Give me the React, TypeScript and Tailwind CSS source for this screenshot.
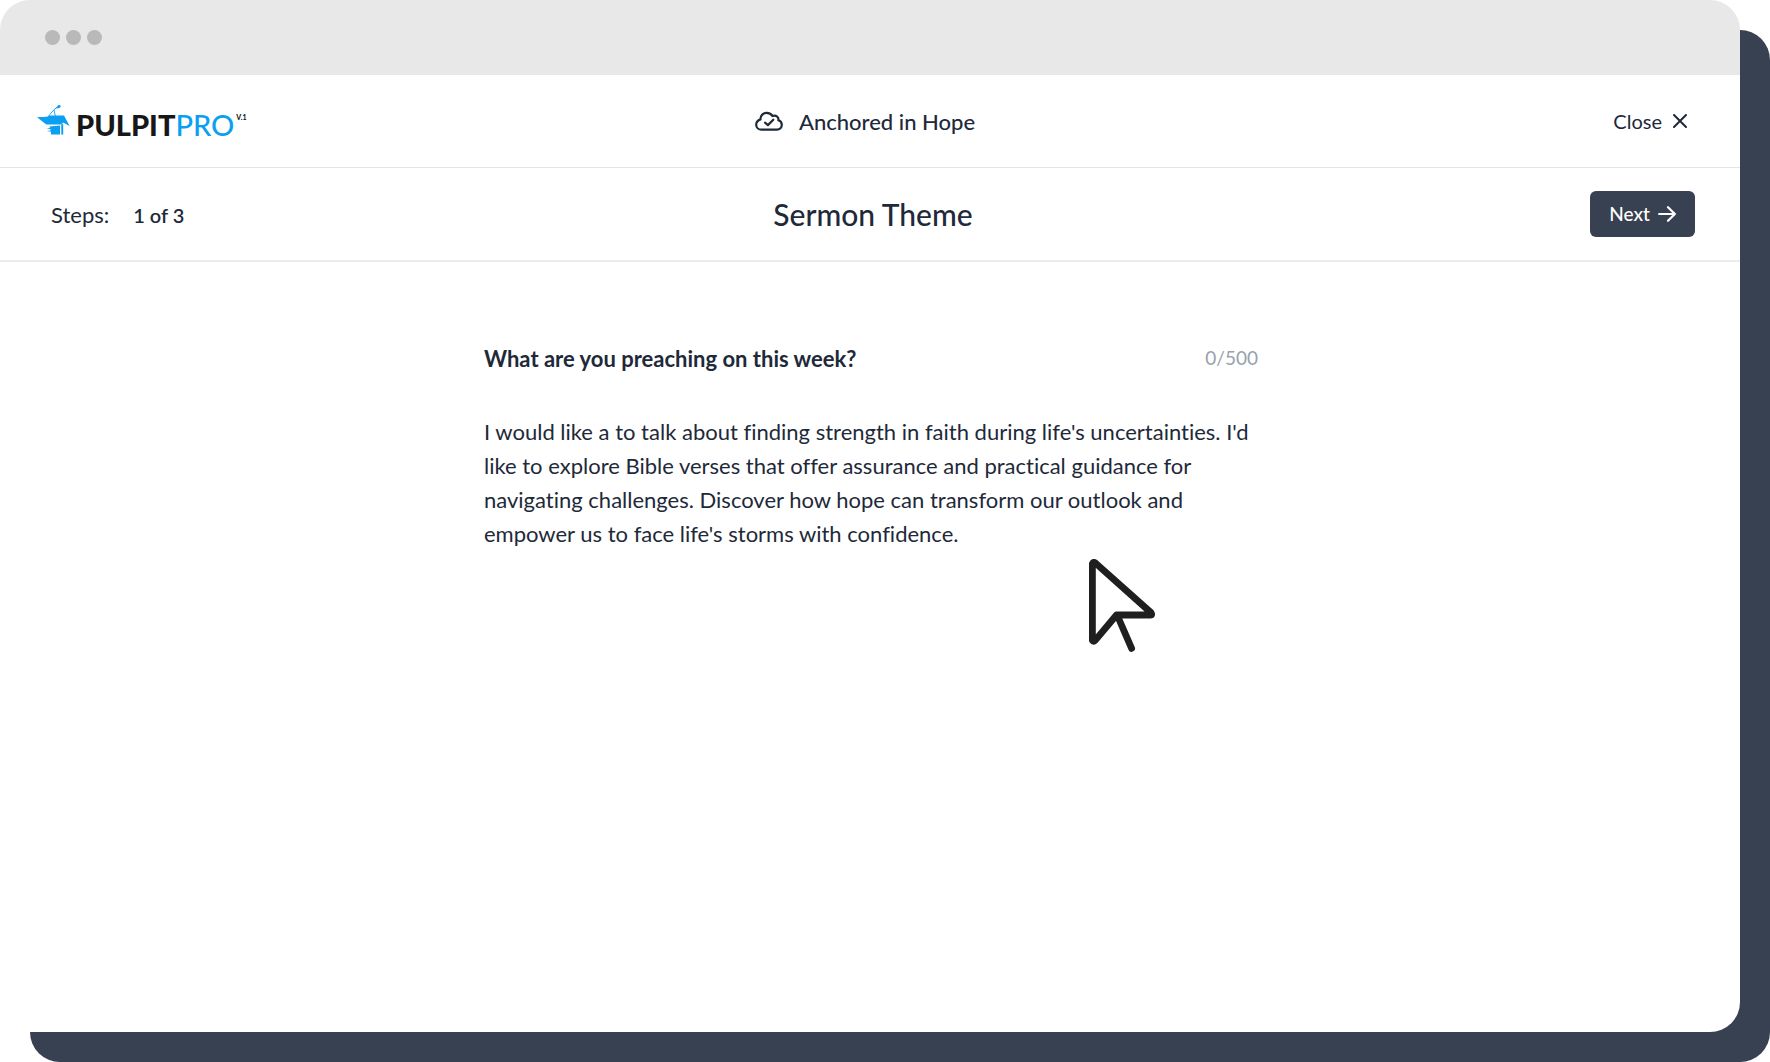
import React from "react";

const SERMON_TEXT =
  "I would like a to talk about finding strength in faith during life's uncertainties. I'd like to explore Bible verses that offer assurance and practical guidance for navigating challenges. Discover how hope can transform our outlook and empower us to face life's storms with confidence.";

function PulpitIcon() {
  return (
    <svg viewBox="0 0 33 32" className="h-8 w-[33px] shrink-0" fill="#0a9ff0" aria-hidden="true">
      <path d="M0 12.2 10 11.8 12.6 10.4H27L32.6 21 26 17.4 24.5 19.4H9.3Z" />
      <path d="M12.5 21.4 23 20.4V29.6H14V26.8L10 26 13.6 25.6V24.2L9.6 23.4 13 23Z" />
      <path d="M24.2 19.8 26.2 18.8V29.4L24.4 29.8Z" />
      <path d="M11.6 11 16.8 4.8 20.4 2M18.3 11 17 4.8" fill="none" stroke="#0a9ff0" strokeWidth="0.9" />
      <path d="M19.2 3.6 20.6 .8Q22.2-.8 23.5 .6 23.9 2.4 22.2 3.1Z" />
    </svg>
  );
}

function CloudCheckIcon() {
  return (
    <svg
      viewBox="15 21 28 20"
      className="h-5 w-7 shrink-0"
      fill="none"
      stroke="currentColor"
      strokeWidth="2.2"
      strokeLinecap="round"
      strokeLinejoin="round"
      aria-hidden="true"
    >
      <path d="M21.5 39.7H36.8C40 39.7 41.8 37.5 41.8 34.8 41.8 32.5 40.5 31 38.4 30.3 39 26.8 35.8 24.6 32.4 26 31.2 23.8 28.8 22.8 26.2 22.9 22.7 23.2 20.2 26 20.5 29.4 18 30.2 16.2 32 16.2 34.7 16.2 37.5 18.5 39.7 21.5 39.7Z" />
      <path d="M25 32.7 27.9 35.1 33.3 29.7" />
    </svg>
  );
}

function CloseIcon() {
  return (
    <svg viewBox="0 0 14 14" className="size-3.5" fill="none" stroke="currentColor" strokeWidth="2" strokeLinecap="round" aria-hidden="true">
      <path d="M1 1 13 13M13 1 1 13" />
    </svg>
  );
}

function ArrowIcon() {
  return (
    <svg
      viewBox="0 0 18 16"
      className="h-4 w-[18px]"
      fill="none"
      stroke="currentColor"
      strokeWidth="2.2"
      strokeLinecap="round"
      strokeLinejoin="round"
      aria-hidden="true"
    >
      <path d="M1.1 8H16.9M10 1.2 16.9 8 10 14.8" />
    </svg>
  );
}

function PointerIcon() {
  return (
    <svg
      viewBox="29 19 66 93"
      className="pointer-events-none absolute top-36 right-[103px] h-[93px] w-[66px]"
      fill="#fff"
      stroke="#1f1f1f"
      strokeWidth="6.8"
      strokeLinecap="round"
      strokeLinejoin="round"
      aria-hidden="true"
    >
      <path d="M32.4 23.6Q33.4 21.4 35.4 23L91 72.6Q92.6 75 90.4 75H56.5L35.2 100.4Q33.4 102.2 32.4 100.4Z" />
      <path d="M58 77 71.6 108.4" />
    </svg>
  );
}

function TitleBar() {
  return (
    <div className="flex h-[75px] items-center gap-1.5 bg-[#e8e8e8] px-[45px]">
      <span className="size-[15px] rounded-full bg-[#b9b9b9]" />
      <span className="size-[15px] rounded-full bg-[#b9b9b9]" />
      <span className="size-[15px] rounded-full bg-[#b9b9b9]" />
    </div>
  );
}

export default function App() {
  return (
    <div className="flex min-h-screen overflow-hidden bg-white pr-[30px] pb-[30px] font-['Lato',sans-serif] text-gray-800 [font-variant-ligatures:none]">
      <div className="flex flex-1 flex-col rounded-[30px] bg-white shadow-[30px_30px_0_#384152]">
        <div className="overflow-hidden rounded-t-[30px]">
          <TitleBar />
        </div>

        <header className="grid h-[93px] grid-cols-[1fr_auto_1fr] items-center border-b border-[#e2e4e6] pr-[53px] pl-[37px]">
          <a href="#" className="flex items-center gap-1.5" aria-label="PulpitPro home">
            <PulpitIcon />
            <span className="flex items-start pt-2 text-[29px] leading-8">
              <span className="font-black text-[#17171a]">PULPIT</span>
              <span className="font-medium text-[#0a9ff0]">PRO</span>
              <span className="pt-0.5 pl-0.5 text-[7px] leading-3 font-black text-[#17171a]">V.1</span>
            </span>
          </a>
          <div className="flex items-center gap-4 pl-1.5 text-[22px] font-medium">
            <CloudCheckIcon />
            <span>Anchored in Hope</span>
          </div>
          <button type="button" className="flex items-center gap-[11px] justify-self-end text-xl">
            Close
            <CloseIcon />
          </button>
        </header>

        <div className="grid h-[94px] grid-cols-[1fr_auto_1fr] items-center border-b-2 border-[#ececec] pr-[45px] pl-[51px]">
          <p className="flex items-baseline gap-6 text-[22px]">
            Steps: <span className="text-xl font-semibold">1 of 3</span>
          </p>
          <h1 className="text-[30px] leading-10 font-medium">Sermon Theme</h1>
          <button
            type="button"
            className="flex h-[46px] items-center gap-2 justify-self-end rounded-md bg-[#384152] px-[19px] text-[19px] font-medium text-white"
          >
            Next
            <ArrowIcon />
          </button>
        </div>

        <main className="mx-auto w-full max-w-[776px] pt-20 pl-0.5">
          <div className="flex items-start justify-between leading-[34px]">
            <label htmlFor="sermon-topic" className="text-[22px] font-bold">
              What are you preaching on this week?
            </label>
            <span className="text-[19px] leading-8 text-gray-400">0/500</span>
          </div>
          <div className="relative mt-[39px]">
            <textarea
              id="sermon-topic"
              rows={6}
              defaultValue={SERMON_TEXT}
              className="block w-full resize-none overflow-hidden text-[22px] leading-[34px] outline-none"
            />
            <PointerIcon />
          </div>
        </main>
      </div>
    </div>
  );
}
